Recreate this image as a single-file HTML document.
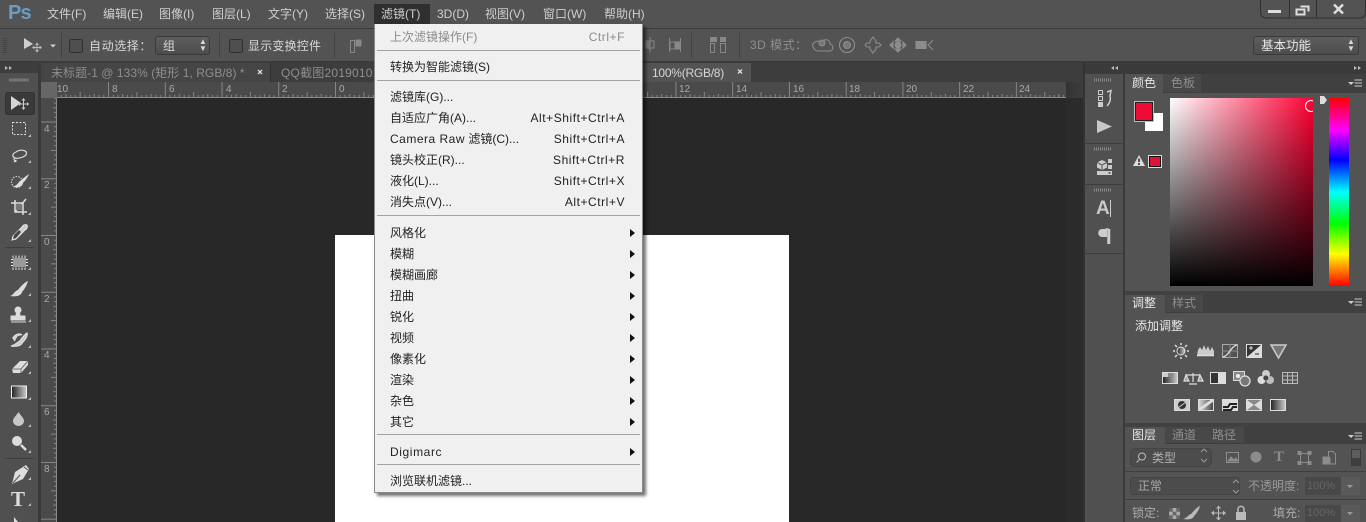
<!DOCTYPE html>
<html><head><meta charset="utf-8"><style>
html,body{margin:0;padding:0;background:#535353}
body{width:1366px;height:522px;overflow:hidden;position:relative;font:12px "Liberation Sans","Noto Sans CJK SC",sans-serif;color:#d8d8d8}
.a{position:absolute}
.t{position:absolute;white-space:nowrap;line-height:16px;height:16px}
.m{color:#cfcfcf;top:6px}
.r{position:absolute;left:374px;width:235px;padding:0 18px 0 16px;height:16px;line-height:16px;color:#222;white-space:nowrap}
.r b{font-weight:normal;position:absolute;right:18px;letter-spacing:.55px}
.r i{position:absolute;left:256px;top:4px;width:0;height:0;border-left:5px solid #111;border-top:4px solid transparent;border-bottom:4px solid transparent}
.s{position:absolute;left:377px;width:263px;height:1px;background:#a3a3a3}
.dd{position:absolute;background:linear-gradient(#5e5e5e,#4d4d4d);border:1px solid #3a3a3a;border-radius:3px;box-sizing:border-box}
.dim{color:#8f8f8f}
</style></head><body>
<!-- bars -->
<div class="a" style="left:0;top:0;width:1366px;height:28px;background:#535353"></div>
<div class="a" style="left:0;top:28px;width:1366px;height:1px;background:#3b3b3b"></div>
<div class="a" style="left:0;top:29px;width:1366px;height:33px;background:#535353"></div>
<div class="a" style="left:0;top:61px;width:1366px;height:1px;background:#3a3a3a"></div>
<div class="a" style="left:0;top:62px;width:1366px;height:460px;background:#535353"></div>
<!-- tabs -->
<div class="a" style="left:41px;top:62px;width:1043px;height:20px;background:#3d3d3d"></div>
<div class="a" style="left:41px;top:63px;width:229px;height:19px;background:#454545"></div>
<div class="a" style="left:270px;top:63px;width:1px;height:19px;background:#2e2e2e"></div>
<div class="a" style="left:640px;top:63px;width:111px;height:19px;background:#535353"></div>
<!-- canvas -->
<div class="a" style="left:57px;top:98px;width:1027px;height:424px;background:#282828"></div>
<div class="a" style="left:1066px;top:82px;width:17px;height:16px;background:linear-gradient(to right,#333,#3d3d3d)"></div>
<div class="a" style="left:1066px;top:98px;width:17px;height:424px;background:#2b2b2b"></div>
<div class="a" style="left:1083px;top:62px;width:2px;height:460px;background:#333"></div>
<div class="a" style="left:335px;top:235px;width:454px;height:287px;background:#fff"></div>
<!-- rulers -->
<div class="a" style="left:41px;top:82px;width:1025px;height:16px;background:#4a4a4a"></div>
<div class="a" style="left:41px;top:82px;width:16px;height:440px;background:#4a4a4a"></div>
<div class="a" style="left:41px;top:82px;width:16px;height:16px;background:#666"></div>
<div class="a" style="left:0;top:62px;width:38px;height:460px;background:#505050"></div>
<div class="a" style="left:0;top:62px;width:38px;height:11px;background:#3d3d3d"></div>
<div class="a" style="left:38px;top:62px;width:3px;height:460px;background:#3a3a3a"></div>
<!-- dock strip -->
<div class="a" style="left:1085px;top:62px;width:281px;height:12px;background:#3a3a3a"></div>
<div class="a" style="left:1085px;top:74px;width:38px;height:448px;background:#505050"></div>
<div class="a" style="left:1123px;top:74px;width:2px;height:448px;background:#3a3a3a"></div>
<div class="a" style="left:1125px;top:291px;width:241px;height:4px;background:#414141"></div>
<div class="a" style="left:1125px;top:423px;width:241px;height:4px;background:#414141"></div>
<svg class="a" style="left:0;top:0" width="1366" height="522" viewBox="0 0 1366 522" fill="none">
<defs>
<pattern id="rh" patternUnits="userSpaceOnUse" x="335" y="82" width="56.74" height="16">
<path d="M.5 0V16M5.2 13V16M10 13V16M14.700 12V16M19.400 13V16M24.100 13V16M28.900 10V16M33.600 13V16M38.300 13V16M43 12V16M47.800 13V16M52.500 13V16" stroke="#868686" stroke-width="1"/>
</pattern>
<pattern id="rv" patternUnits="userSpaceOnUse" x="41" y="235" width="16" height="56.74">
<path d="M0 .5H16M13 5.200H16M13 10H16M12 14.700H16M13 19.400H16M13 24.100H16M10 28.900H16M13 33.600H16M13 38.300H16M12 43H16M13 47.800H16M13 52.500H16" stroke="#868686"/>
</pattern>
<linearGradient id="sw" x1="0" x2="1"><stop offset="0" stop-color="#222"/><stop offset="1" stop-color="#ccc"/></linearGradient>
<linearGradient id="sw2" x1="0" x2="1"><stop offset="0" stop-color="#ddd"/><stop offset="1" stop-color="#444"/></linearGradient>
</defs>
<rect x="57" y="82" width="1009" height="16" fill="url(#rh)"/>
<rect x="41" y="98" width="16" height="424" fill="url(#rv)"/>
<path d="M57 97.500H1066M56.500 98V522" stroke="#8a8a8a"/>
<!-- toolbar grip -->
<path d="M4 38V53M6 38V53" stroke="#333" stroke-dasharray="1 1" stroke-width="1"/>
<path d="M61.500 33V58M219.500 33V58M334.500 33V58M691.500 33V58M739.500 33V58" stroke="#424242"/>
<!-- options move icon -->
<path d="M24 38V49L33 44Z" fill="#cfcfcf"/>
<path d="M37 43V52M32.500 47.500H41.500" stroke="#bbb"/><path d="M35 45L37 42.500 39 45ZM35 50L37 52.500 39 50ZM34.500 45.500L32 47.500 34.500 49.500ZM39.500 45.500L42 47.500 39.500 49.500Z" fill="#bbb"/>
<path d="M50 44.500H56L53 47.500Z" fill="#ccc"/>
<rect x="69.500" y="39.500" width="13" height="13" rx="2" fill="#4e4e4e" stroke="#2f2f2f"/>
<rect x="229.500" y="39.500" width="13" height="13" rx="2" fill="#4e4e4e" stroke="#2f2f2f"/>
<!-- align icons -->
<path d="M350.500 40.500H354.500V52.500H350.500ZM356 40H361V46H356Z" stroke="#888"/><path d="M356 40H361V46H356Z" fill="#888"/>
<path d="M650 37V52M646 41H654V48H646Z" stroke="#888"/><path d="M646 41H650V48H646Z" fill="#777"/>
<path d="M669.500 38V52M680.500 38V52M670 42H675V49H670ZM676 42H680V49H676Z" stroke="#888"/><path d="M676 42H680V49H676Z" fill="#888"/>
<path d="M710.500 37.500H716.500V41.500H710.500ZM710.500 43.500H714.500V52.500H710.500ZM720.500 37.500H725.500V41.500H720.500ZM720.500 43.500H725.500V52.500H720.500Z" stroke="#888"/>
<path d="M720.500 37.500H725.500V41.500H720.500ZM710.500 37.500H716.500V41.500H710.500Z" fill="#888"/>
<!-- 3D icons -->
<g stroke="#8c8c8c" stroke-width="1.100">
<path d="M813 47C811 42 819 39 822 43 824 38 830 39 830 44 834 45 834 51 829 51H818C815 51 814 49 813 47Z"/>
<circle cx="822" cy="43" r="3" fill="#777"/>
<circle cx="847" cy="45" r="7.500"/><circle cx="847" cy="45" r="3.500" fill="#777"/>
<path d="M873 37L876 41V43H879L881 45 879 47H876V49L873 53 870 49V47H867L865 45 867 43H870V41Z"/>
<path d="M898 38L901 41H895ZM898 52L901 49H895ZM890 45L893 42V48ZM906 45L903 42V48Z" fill="#8c8c8c"/><circle cx="898" cy="45" r="3" fill="#8c8c8c"/>
<path d="M916 41.500H926V48.500H916Z" fill="#8c8c8c"/><path d="M933 40L928 45 933 50"/>
</g>
<!-- tab x marks -->
<path d="M258 70L262 74M262 70L258 74M738 69.500L742 73.500M742 69.500L738 73.500" stroke="#ddd" stroke-width="1.300"/>
<!-- dock arrows -->
<path d="M5 66V70L8 68ZM9 66V70L12 68Z" fill="#bbb"/>
<path d="M1118 66V70L1115 68ZM1114 66V70L1111 68ZM1354 66V70L1357 68ZM1358 66V70L1361 68Z" fill="#bbb"/>
<path d="M9.500 80H29" stroke="#999" stroke-dasharray="1 1" stroke-width="3"/>
<!-- tools -->
<rect x="5.500" y="92.500" width="29" height="22" rx="2" fill="#3a3a3a" stroke="#333"/>
<path d="M11 96V110L21 103Z" fill="#d4d4d4"/>
<path d="M23.500 99V109M18.500 104H28.500" stroke="#ccc"/><path d="M21.500 100.500L23.500 98 25.500 100.500ZM21.500 107.500L23.500 110 25.500 107.500ZM20 102L18 104 20 106ZM27 102L29 104 27 106Z" fill="#ccc"/>
<rect x="12.500" y="122.500" width="13" height="12" stroke="#ddd" stroke-dasharray="2 1.500"/>
<path d="M31 137h-3l3-3ZM31 163h-3l3-3ZM31 189h-3l3-3ZM31 215h-3l3-3ZM31 242h-3l3-3ZM31 270h-3l3-3ZM31 296h-3l3-3ZM31 322h-3l3-3ZM31 348h-3l3-3ZM31 374h-3l3-3ZM31 400h-3l3-3ZM31 427h-3l3-3ZM31 453h-3l3-3ZM31 480h-3l3-3ZM31 506h-3l3-3Z" fill="#bbb"/>
<path d="M16 152C20 149 27 150 26.500 153.500 26 157 18 159 15 158 11.500 156.500 12.500 153.500 16 152ZM15 158C13 159 14.500 161 16 160.500 16 162 14.500 162 14 161" stroke="#ddd" stroke-width="1.200"/>
<circle cx="17" cy="182" r="5.500" stroke="#ddd" stroke-dasharray="1.500 1.200"/><path d="M29 174C26 176 21 180 19 182 17 185 15 186 13 187 18 188 22 187 23 183 25 181 28 177 29 174Z" fill="#ddd"/>
<path d="M15 200V212H27M11 203H23V215M26 199L15 212" stroke="#ddd" stroke-width="1.500"/><rect x="16" y="204" width="6" height="6" fill="#777"/>
<path d="M27 225C25 224 23 225 22 227L13 236 12 240 16 239 25 230C27 229 28 227 27 225Z" fill="#ccc" stroke="#e6e6e6"/><path d="M19 230L14 235 13 239 16 238 21 232Z" fill="#444"/>
<rect x="13" y="258" width="13" height="9" fill="#999"/><path d="M13 255.500V270M16 255.500V270M19 255.500V270M22 255.500V270M25 255.500V270" stroke="#e6e6e6" stroke-dasharray="2.500 9.500"/><path d="M11 259.500H28M11 262.500H28M11 265.500H28" stroke="#e6e6e6" stroke-dasharray="2 13"/>
<path d="M28 281C25 282 20 287 18 290 14 291 14 295 10 296 16 297 21 296 22 292 24 290 27 285 28 281Z" fill="#ddd"/>
<circle cx="18" cy="310" r="3.500" fill="#ddd"/><path d="M16.500 312H19.500L20 316H25V320H11V316H16ZM11 322H26" stroke="#ddd" fill="#ddd"/>
<path d="M13 338C15 334 20 333 22 335M27 333C25 334 21 339 20 341 17 342 16 345 11 346 17 347 21 346 23 342 25 340 28 336 27 333ZM15 341L13 338 17 337" stroke="#ddd" stroke-width="1.200" fill="#ccc"/>
<path d="M12 369L20 361H28V365L21 373H13Z" fill="#ddd"/><path d="M12 369H21V373M21 369L28 361" stroke="#777"/>
<rect x="11.500" y="386" width="15" height="12" fill="url(#sw)" stroke="#eee"/>
<path d="M18.500 412C16 416 13 418 13 421 13 424 16 426 18.500 426 21 426 24 424 24 421 24 418 21 416 18.500 412Z" fill="#c8c8c8"/>
<circle cx="17" cy="441" r="5" fill="#ddd"/><path d="M21 445L26 450" stroke="#ddd" stroke-width="2.500"/>
<path d="M5 247.500H34M5 458.500H34" stroke="#3e3e3e"/>
<path d="M26 465L29 469 23 479 12 484 15 472Z" fill="#ddd"/><path d="M24 467L28 470" stroke="#555"/><path d="M13 483L20 475" stroke="#555"/>
<path d="M14 517V522L18 522Z" fill="#ddd"/>
<!-- dock icons -->
<path d="M1094 80H1112M1094 149H1112M1094 190H1112" stroke="#8a8a8a" stroke-width="3" stroke-dasharray="1 1"/>
<path d="M1085 143.500H1123M1085 184.500H1123M1085 253.500H1123" stroke="#3c3c3c"/>
<path d="M1098.500 90.500H1102.500V94.500H1098.500ZM1098.500 96.500H1102.500V100.500H1098.500Z" stroke="#ccc"/><rect x="1098" y="102" width="5" height="5" fill="#ccc"/>
<path d="M1107 92L1111 90.500 1110 96C1111 99 1110 103 1107 106" stroke="#ccc" stroke-width="1.500"/>
<path d="M1097 120V133L1112 126.500Z" fill="#c8c8c8"/>
<path d="M1102 160L1107 162.500V167.500L1102 170 1097 167.500V162.500Z" fill="#ccc"/><path d="M1097 162.500L1102 165 1107 162.500M1102 165V170" stroke="#555"/>
<rect x="1108" y="159" width="4" height="4" fill="#ccc"/><rect x="1108" y="165" width="4" height="4" fill="#ccc"/><rect x="1097" y="171" width="15" height="4" fill="#ccc"/><path d="M1108 172.500H1111L1109.500 174Z" fill="#222"/>
<path d="M1110.500 200V217" stroke="#ccc"/>
<path d="M1105.500 229H1108V244M1109.500 229V244" stroke="#ccc" stroke-width="1.500"/><path d="M1107 229H1102C1097 229 1097 237 1102 237H1107Z" fill="#ccc"/>
<!-- panels -->
<path d="M1125 92.500H1366M1125 312.500H1366M1125 443.500H1366M1125 471.500H1366M1125 499.500H1366" stroke="#3e3e3e"/>
<!-- adjustment icons -->
<g stroke="#ddd">
<circle cx="1181" cy="351" r="4" fill="url(#sw)"/><path d="M1181 343V345M1181 357V359M1173 351H1175M1187 351H1189M1175 345L1177 347M1187 345L1185 347M1175 357L1177 355M1187 357L1185 355" stroke-width="1.500"/>
<path d="M1197 355.500H1214V351L1212 347 1210 351 1208 346 1206 350 1204 345 1202 350 1200 347 1198 350Z" fill="#ccc" stroke="none"/><path d="M1197 355.500H1214" stroke-width="1.500"/>
<rect x="1222.500" y="344.500" width="15" height="13" stroke="#aaa"/><path d="M1222 351H1238M1230 344V358" stroke="#888"/><path d="M1223 357C1229 356 1231 346 1237 345" stroke-width="1.300"/>
<rect x="1246.500" y="344.500" width="15" height="13" fill="#333"/><path d="M1247 357L1261 345V357Z" fill="#ddd" stroke="none"/><path d="M1249 348H1253M1251 346V350" stroke-width="1"/><path d="M1255 354H1259" stroke="#222"/>
<path d="M1271 345H1286L1278.500 358Z" fill="#777" stroke="#ccc" stroke-width="1.500"/>
<rect x="1162.500" y="372.500" width="15" height="11" fill="url(#sw)"/><path d="M1163 373H1168V377H1163Z" fill="#ccc" stroke="none"/><path d="M1168 373H1173V377H1168Z" fill="#888" stroke="none"/>
<path d="M1193 373V382M1186 375H1200M1186 375L1184 381H1189ZM1200 375L1198 381H1203ZM1189 384H1197" stroke-width="1.200" fill="#999"/>
<rect x="1210.500" y="372.500" width="15" height="11" fill="#ddd"/><rect x="1211" y="373" width="7" height="10" fill="#333" stroke="none"/>
<rect x="1233.500" y="371.500" width="11" height="9" fill="#888"/><circle cx="1245" cy="381" r="5" fill="#777" stroke-width="1.300"/><circle cx="1238" cy="376" r="2" fill="#eee" stroke="none"/>
<circle cx="1266" cy="374" r="4" fill="#ccc" stroke="none"/><circle cx="1261.500" cy="380" r="4" fill="#ddd" stroke="none"/><circle cx="1270" cy="380" r="4" fill="#bbb" stroke="none"/><circle cx="1265.800" cy="378" r="2.500" fill="#444" stroke="none"/>
<rect x="1282.500" y="372.500" width="15" height="11" stroke="#bbb"/><path d="M1282 376H1298M1282 380H1298M1287.500 372V384M1292.500 372V384" stroke="#bbb"/>
<rect x="1174.500" y="399.500" width="15" height="11" fill="#ccc"/><circle cx="1182" cy="405" r="4" fill="#333" stroke="none"/><path d="M1175 410L1189 400" stroke="#ccc"/>
<rect x="1198.500" y="399.500" width="15" height="11" fill="url(#sw2)"/><path d="M1199 410L1213 400" stroke="#ddd" stroke-width="3"/>
<rect x="1222.500" y="399.500" width="15" height="11" fill="#ddd"/><path d="M1223 407H1228L1230 404H1237M1223 410H1231L1233 407H1237" stroke="#222" stroke-width="2"/>
<rect x="1246.500" y="399.500" width="15" height="11" fill="#888"/><path d="M1247 400L1254 405 1247 410ZM1261 400L1254 405 1261 410Z" fill="#ddd" stroke="none"/>
<rect x="1270.500" y="399.500" width="15" height="11" fill="url(#sw)"/>
</g>
<!-- warning -->
<path d="M1139 155L1145 166H1133Z" fill="#ddd"/><path d="M1139 158.500V162M1139 163V165" stroke="#222" stroke-width="1.500"/>
<!-- window controls -->
<path d="M1268 11.500H1281" stroke="#ddd" stroke-width="3"/>
<path d="M1300.500 6.500H1308.500V11.500M1296.500 9.500H1304.500V14.500H1296.500Z" stroke="#ddd" stroke-width="2"/>
<path d="M1334 4.500L1343 13.500M1343 4.500L1334 13.500" stroke="#ddd" stroke-width="2.500"/>
<path d="M1260.500 0V11Q1260.500 18 1266 18H1360Q1365.500 18 1365.500 12V0M1289.500 0V18M1316.500 0V18" stroke="#2f2f2f"/>
</svg>
<!-- tool T and dock A -->
<div class="t" style="left:11px;top:488px;height:22px;line-height:22px;font:bold 21px/22px 'Liberation Serif',serif;color:#ddd">T</div>
<div class="t" style="left:1096px;top:199px;height:20px;line-height:20px;font-size:19px;font-weight:bold;color:#c8c8c8">A</div>
<!-- Ps -->
<div class="t" style="left:8px;top:1px;height:24px;line-height:24px;font-size:20px;font-weight:bold;color:#6b9cc4;letter-spacing:-.8px">Ps</div>
<!-- menu -->
<div class="a" style="left:374px;top:4px;width:56px;height:20px;background:#2f2f2f"></div>
<div class="t m" style="left:47px">文件(F)</div><div class="t m" style="left:103px">编辑(E)</div><div class="t m" style="left:159px">图像(I)</div><div class="t m" style="left:212px">图层(L)</div><div class="t m" style="left:268px">文字(Y)</div><div class="t m" style="left:325px">选择(S)</div><div class="t m" style="left:381px">滤镜(T)</div><div class="t m" style="left:437px">3D(D)</div><div class="t m" style="left:485px">视图(V)</div><div class="t m" style="left:543px">窗口(W)</div><div class="t m" style="left:604px">帮助(H)</div>
<!-- options -->
<div class="t" style="left:89px;top:38px;letter-spacing:.6px">自动选择：</div>
<div class="dd" style="left:155px;top:36px;width:55px;height:19px"></div><div class="t" style="left:163px;top:38px">组</div>
<div class="t" style="left:199px;top:39px;font-size:8px;line-height:6px;height:6px">▲</div><div class="t" style="left:199px;top:46px;font-size:8px;line-height:6px;height:6px">▼</div>
<div class="t" style="left:248px;top:38px;letter-spacing:.2px">显示变换控件</div>
<div class="t dim" style="left:750px;top:37px;letter-spacing:.5px">3D 模式：</div>
<div class="dd" style="left:1253px;top:36px;width:106px;height:19px"></div><div class="t" style="left:1261px;top:38px;color:#e8e8e8;font-size:12.500px">基本功能</div>
<div class="t" style="left:1347px;top:39px;font-size:8px;line-height:6px;height:6px">▲</div><div class="t" style="left:1347px;top:46px;font-size:8px;line-height:6px;height:6px">▼</div>
<!-- tabs text -->
<div class="t" style="left:51px;top:65px;color:#8e8e8e;letter-spacing:.05px">未标题-1 @ 133% (矩形 1, RGB/8) *</div>
<div class="t" style="left:281px;top:65px;color:#8e8e8e;letter-spacing:.2px">QQ截图20190101</div>
<div class="t" style="left:652px;top:65px;color:#d6d6d6;letter-spacing:-.25px">100%(RGB/8)</div>
<!-- ruler labels -->
<div style="font-size:10px;color:#a8a8a8">
<div class="t" style="left:57px;top:82px">10</div><div class="t" style="left:112px;top:82px">8</div><div class="t" style="left:169px;top:82px">6</div><div class="t" style="left:226px;top:82px">4</div><div class="t" style="left:282px;top:82px">2</div><div class="t" style="left:339px;top:82px">0</div>
<div class="t" style="left:679px;top:82px">12</div><div class="t" style="left:736px;top:82px">14</div><div class="t" style="left:793px;top:82px">16</div><div class="t" style="left:849px;top:82px">18</div><div class="t" style="left:906px;top:82px">20</div><div class="t" style="left:963px;top:82px">22</div><div class="t" style="left:1019px;top:82px">24</div>
<div class="t" style="left:44px;top:122px">4</div><div class="t" style="left:44px;top:178px">2</div><div class="t" style="left:44px;top:235px">0</div><div class="t" style="left:44px;top:292px">2</div><div class="t" style="left:44px;top:348px">4</div><div class="t" style="left:44px;top:405px">6</div><div class="t" style="left:44px;top:462px">8</div>
</div>
<!-- panel tabs -->
<div class="a" style="left:1125px;top:74px;width:241px;height:18px;background:#404040"></div>
<div class="a" style="left:1125px;top:74px;width:38px;height:19px;background:#535353"></div>
<div class="a" style="left:1163px;top:74px;width:38px;height:18px;background:#484848"></div>
<div class="t" style="left:1132px;top:75px;color:#e6e6e6">颜色</div><div class="t" style="left:1171px;top:75px;color:#8e8e8e">色板</div>
<svg class="a" style="left:1345px;top:78px" width="20" height="10"><path d="M3 4H9L6 7Z" fill="#ccc"/><path d="M9.500 2H17M9.500 5H17M9.500 8H17" stroke="#ccc"/></svg>
<div class="a" style="left:1125px;top:295px;width:241px;height:17px;background:#404040"></div>
<div class="a" style="left:1125px;top:295px;width:40px;height:18px;background:#535353"></div>
<div class="a" style="left:1165px;top:295px;width:38px;height:17px;background:#484848"></div>
<div class="t" style="left:1132px;top:295px;color:#e6e6e6">调整</div><div class="t" style="left:1172px;top:295px;color:#8e8e8e">样式</div>
<svg class="a" style="left:1345px;top:297px" width="20" height="10"><path d="M3 4H9L6 7Z" fill="#ccc"/><path d="M9.500 2H17M9.500 5H17M9.500 8H17" stroke="#ccc"/></svg>
<div class="t" style="left:1135px;top:318px;color:#e8e8e8">添加调整</div>
<div class="a" style="left:1125px;top:427px;width:241px;height:16px;background:#404040"></div>
<div class="a" style="left:1125px;top:427px;width:40px;height:17px;background:#535353"></div>
<div class="a" style="left:1165px;top:427px;width:79px;height:16px;background:#484848"></div>
<div class="t" style="left:1132px;top:427px;color:#e6e6e6">图层</div><div class="t" style="left:1172px;top:427px;color:#8e8e8e">通道</div><div class="t" style="left:1212px;top:427px;color:#8e8e8e">路径</div>
<svg class="a" style="left:1345px;top:431px" width="20" height="10"><path d="M3 4H9L6 7Z" fill="#ccc"/><path d="M9.500 2H17M9.500 5H17M9.500 8H17" stroke="#ccc"/></svg>
<div class="dd" style="left:1130px;top:448px;width:82px;height:19px;border-radius:5px;background:#4c4c4c;border-color:#444"></div><div class="t" style="left:1152px;top:450px;color:#b0b0b0">类型</div>
<div class="dd" style="left:1130px;top:477px;width:110px;height:18px;background:#4c4c4c;border-color:#444"></div><div class="t" style="left:1138px;top:478px;color:#a8a8a8">正常</div>
<div class="t" style="left:1248px;top:478px;color:#999">不透明度:</div>
<div class="a" style="left:1305px;top:477px;width:36px;height:18px;background:#484848"></div><div class="t" style="left:1307px;top:478px;color:#666;font-size:11px">100%</div>
<div class="a" style="left:1341px;top:477px;width:19px;height:18px;background:#5a5a5a"></div>
<div class="t" style="left:1132px;top:505px;color:#aaa">锁定:</div>
<div class="t" style="left:1273px;top:505px;color:#aaa">填充:</div>
<div class="a" style="left:1305px;top:505px;width:36px;height:17px;background:#484848"></div><div class="t" style="left:1307px;top:505px;color:#666;font-size:11px">100%</div>
<div class="a" style="left:1341px;top:505px;width:19px;height:17px;background:#5a5a5a"></div>
<svg class="a" style="left:0;top:0" width="1366" height="522" fill="none">
<path d="M1201 452L1204 449 1207 452M1201 459L1204 462 1207 459M1233 483L1236 480 1239 483M1233 490L1236 493 1239 490" stroke="#999"/>
<path d="M1347 485H1353L1350 488ZM1347 512H1353L1350 515Z" fill="#999"/>
<circle cx="1142" cy="456.500" r="3.500" stroke="#bbb"/><path d="M1139.500 459.500L1136.500 462.500" stroke="#bbb"/>
<g stroke="#8c8c8c">
<rect x="1226.500" y="452.500" width="12" height="10"/><path d="M1228 461L1231 457 1234 460 1236 458 1238 461Z" fill="#8c8c8c"/>
<circle cx="1256" cy="457" r="5" fill="#8c8c8c"/>
<path d="M1300.500 453.500H1308.500V462.500H1300.500Z"/><path d="M1298 451.500h3v3h-3zM1308 451.500h3v3h-3zM1298 461.500h3v3h-3zM1308 461.500h3v3h-3z" fill="#8c8c8c"/>
<path d="M1328.500 451.500H1333L1335.500 454V464H1330V458H1328.500Z"/><rect x="1323" y="457" width="6" height="7" fill="#8c8c8c"/>
</g>
<rect x="1351.500" y="449.500" width="9" height="16" fill="#5d5d5d" stroke="#3b3b3b"/><rect x="1352" y="458" width="8" height="7" fill="#3f3f3f"/>
<rect x="1169" y="508" width="11" height="11" fill="#aaa"/><path d="M1169 508h3.700v3.700h-3.700zM1176.300 508h3.700v3.700h-3.700zM1172.700 511.700h3.700v3.700h-3.700zM1169 515.300h3.700v3.700h-3.700zM1176.300 515.300h3.700v3.700h-3.700z" fill="#666"/>
<path d="M1200 506C1197 507 1193 512 1191 514 1188 515 1187 518 1183 519 1189 520 1193 519 1194 516 1196 514 1199 510 1200 506Z" fill="#bbb"/>
<path d="M1218.500 506V520M1212 513H1225" stroke="#bbb"/><path d="M1216 508.500L1218.500 505.500 1221 508.500ZM1216 517.500L1218.500 520.500 1221 517.500ZM1214 510.500L1211 513 1214 515.500ZM1223 510.500L1226 513 1223 515.500Z" fill="#bbb"/>
<rect x="1236" y="512" width="10" height="8" fill="#bbb"/><path d="M1238 512V509C1238 505.500 1244 505.500 1244 509V512" stroke="#bbb" stroke-width="1.500"/>
</svg>
<div class="t" style="left:1274px;top:448px;font:bold 15px/18px 'Liberation Serif',serif;height:18px;color:#8c8c8c">T</div>
<!-- color picker -->
<div class="a" style="left:1170px;top:98px;width:143px;height:188px;overflow:hidden;background:linear-gradient(to bottom,rgba(0,0,0,0),#000),linear-gradient(to right,#fff,#ff0033)"><div class="a" style="left:135px;top:2px;width:10px;height:10px;border:1px solid #fff;border-radius:50%"></div></div>
<div class="a" style="left:1329px;top:98px;width:20px;height:188px;background:linear-gradient(to bottom,#f00 0%,#f0f 17%,#00f 33%,#0ff 50%,#0f0 67%,#ff0 83%,#f00 100%)"></div>
<svg class="a" style="left:1319px;top:95px" width="9" height="11"><path d="M1 1H5L8 5 5 9H1Z" fill="#ddd"/></svg>
<div class="a" style="left:1145px;top:113px;width:18px;height:18px;background:#fff"></div>
<div class="a" style="left:1135px;top:102px;width:18px;height:19px;box-sizing:border-box;background:#f00a36;border:1px solid #222;outline:1px solid #bbb"></div>
<div class="a" style="left:1149px;top:156px;width:12px;height:11px;box-sizing:border-box;background:#dc143c;border:1px solid #111;outline:1px solid #ddd"></div>
<!-- filter menu -->
<div class="a" style="left:374px;top:24px;width:269px;height:469px;background:#f0f0f0;border-left:1px solid #8a8a8a;border-right:1px solid #8a8a8a;border-bottom:1px solid #8a8a8a;box-sizing:border-box;box-shadow:3px 3px 3px rgba(0,0,0,.55)"></div>
<div class="r" style="top:29px;color:#8b8b8b">上次滤镜操作(F)<b>Ctrl+F</b></div>
<div class="s" style="top:50px"></div>
<div class="r" style="top:59px">转换为智能滤镜(S)</div>
<div class="s" style="top:80px"></div>
<div class="r" style="top:89px">滤镜库(G)...</div>
<div class="r" style="top:110px">自适应广角(A)...<b>Alt+Shift+Ctrl+A</b></div>
<div class="r" style="top:131px"><span style="letter-spacing:.5px">Camera Raw</span> 滤镜(C)...<b>Shift+Ctrl+A</b></div>
<div class="r" style="top:152px">镜头校正(R)...<b>Shift+Ctrl+R</b></div>
<div class="r" style="top:173px">液化(L)...<b>Shift+Ctrl+X</b></div>
<div class="r" style="top:194px">消失点(V)...<b>Alt+Ctrl+V</b></div>
<div class="s" style="top:215px"></div>
<div class="r" style="top:225px">风格化<i></i></div>
<div class="r" style="top:246px">模糊<i></i></div>
<div class="r" style="top:267px">模糊画廊<i></i></div>
<div class="r" style="top:288px">扭曲<i></i></div>
<div class="r" style="top:309px">锐化<i></i></div>
<div class="r" style="top:330px">视频<i></i></div>
<div class="r" style="top:351px">像素化<i></i></div>
<div class="r" style="top:372px">渲染<i></i></div>
<div class="r" style="top:393px">杂色<i></i></div>
<div class="r" style="top:414px">其它<i></i></div>
<div class="s" style="top:434px"></div>
<div class="r" style="top:444px;letter-spacing:.6px">Digimarc<i></i></div>
<div class="s" style="top:464px"></div>
<div class="r" style="top:473px">浏览联机滤镜...</div>
</body></html>
